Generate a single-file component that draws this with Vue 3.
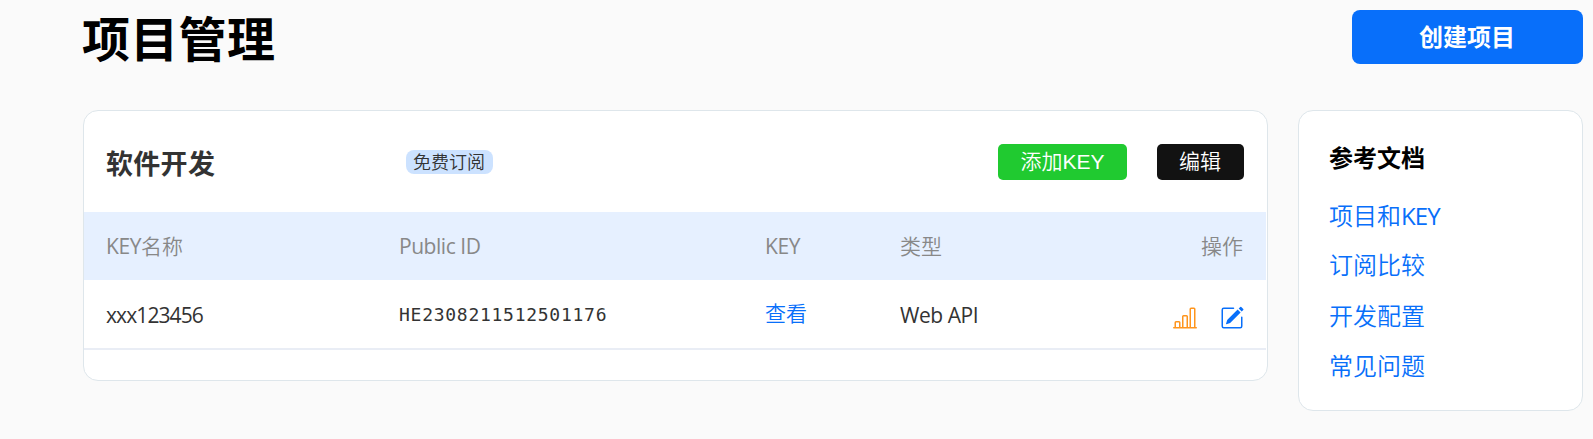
<script setup>
const keys = [
  { name: 'xxx123456', publicId: 'HE2308211512501176', type: 'Web API' }
]
const docs = [
  { zh: '项目和', latin: 'KEY' },
  { zh: '订阅比较' },
  { zh: '开发配置' },
  { zh: '常见问题' }
]
</script>

<template>
  <div class="page">
    <header class="top">
      <h1>项目管理</h1>
      <button class="create">创建项目</button>
    </header>
    <div class="content">
      <main class="card project">
        <div class="project-head">
          <h2>软件开发</h2>
          <div class="plan"><span class="badge">免费订阅</span></div>
          <button class="btn add">添加KEY</button>
          <button class="btn edit">编辑</button>
        </div>
        <div class="row head">
          <span class="first"><span class="latin">KEY</span>名称</span>
          <span class="latin">Public ID</span>
          <span class="latin">KEY</span>
          <span>类型</span>
          <span class="actions">操作</span>
        </div>
        <div v-for="k in keys" :key="k.publicId" class="row body">
          <span class="latin name">{{ k.name }}</span>
          <span class="mono">{{ k.publicId }}</span>
          <a class="view">查看</a>
          <span class="latin">{{ k.type }}</span>
          <span class="actions icons">
            <svg class="chart" viewBox="0 0 16 16" width="24" height="24" fill="currentColor">
              <path d="M11 2a1 1 0 0 1 1-1h2a1 1 0 0 1 1 1v12h.5a.5.5 0 0 1 0 1H.5a.5.5 0 0 1 0-1H1v-3a1 1 0 0 1 1-1h2a1 1 0 0 1 1 1v3h1V7a1 1 0 0 1 1-1h2a1 1 0 0 1 1 1v7h1V2zm1 12h2V2h-2v12zm-3 0V7H7v7h2zm-5 0v-3H2v3h2z" />
            </svg>
            <svg class="pencil" viewBox="0 0 16 16" width="24" height="24" fill="currentColor">
              <path d="M15.502 1.94a.5.5 0 0 1 0 .706L14.459 3.69l-2-2L13.502.646a.5.5 0 0 1 .707 0l1.293 1.293zm-1.75 2.456-2-2L4.939 9.21a.5.5 0 0 0-.121.196l-.805 2.414a.25.25 0 0 0 .316.316l2.414-.805a.5.5 0 0 0 .196-.12l6.813-6.814z" />
              <path fill-rule="evenodd" d="M1 13.5A1.5 1.5 0 0 0 2.5 15h11a1.5 1.5 0 0 0 1.5-1.5v-6a.5.5 0 0 0-1 0v6a.5.5 0 0 1-.5.5h-11a.5.5 0 0 1-.5-.5v-11a.5.5 0 0 1 .5-.5H9a.5.5 0 0 0 0-1H2.5A1.5 1.5 0 0 0 1 2.5v11z" />
            </svg>
          </span>
        </div>
      </main>
      <aside class="card docs">
        <h3>参考文档</h3>
        <a v-for="d in docs" :key="d.zh">{{ d.zh }}<span v-if="d.latin" class="latin">{{ d.latin }}</span></a>
      </aside>
    </div>
  </div>
</template>

<style>
html, body { margin: 0; background: #fafafa; overflow: hidden; }
</style>

<style scoped>
* { box-sizing: border-box; }
.page {
  height: 439px;
  padding: 10px 10px 0 83px;
  background: #fafafa;
  color: #333;
  font-family: "Liberation Sans", "Noto Sans CJK SC", sans-serif;
  font-weight: 350;
  white-space: nowrap;
}
h1, h2, h3 { margin: 0; font-weight: 700; }
button { border: 0; padding: 0; color: #fff; font-family: inherit; }
.latin { font-family: "Open Sans", "Noto Sans", sans-serif; font-weight: 400; letter-spacing: -0.45px; }
.top { display: flex; justify-content: space-between; height: 100px; }
h1 { font-size: 48px; line-height: 62px; color: #000; margin-left: -1px; letter-spacing: 0.3px; }
.create {
  width: 231px;
  height: 54px;
  padding-right: 1px;
  border-radius: 8px;
  background: #086ffa;
  font-size: 24px;
  font-weight: 700;
  line-height: 56px;
}
.content { display: flex; align-items: flex-start; gap: 30px; }
.card { background: #fff; border: 1px solid #dee6eb; border-radius: 15px; }
.project { width: 1185px; height: 271px; }
.project-head { display: flex; align-items: center; height: 101px; padding: 0 23px; }
h2 { width: 300px; font-size: 27px; line-height: 40px; margin: 6px 0 0 -1px; letter-spacing: 0.3px; }
.plan { flex: 1; display: flex; }
.badge {
  width: 87px;
  height: 24px;
  padding-right: 1px;
  border-radius: 8px;
  background: #cce2ff;
  text-align: center;
  font-size: 18px;
  line-height: 26px;
}
.btn { height: 36px; border-radius: 5px; font-size: 21px; font-weight: 350; line-height: 36px; }
.add { width: 129px; background: #20ca30; margin-right: 30px; }
.edit { width: 87px; padding-right: 1px; background: #121212; }
.row {
  display: grid;
  grid-template-columns: 292px 366px 135px 1fr 100px;
  padding: 0 23px;
  margin-right: 1px;
  font-size: 21px;
  line-height: 68px;
}
.row > span, .row > a { height: 68px; }
.head { height: 68px; background: #e6f0ff; color: #888; line-height: 69px; }
.first { margin-left: -1px; }
.body { height: 70px; border-bottom: 2px solid #e9edf5; }
.body .latin { line-height: 70px; }
.body .name { letter-spacing: -0.9px; margin-left: -1px; }
.mono { font-family: "DejaVu Sans Mono", monospace; font-size: 18px; letter-spacing: 0.73px; line-height: 69px; }
.view, .docs a { color: #086ffa; }
.actions { text-align: right; }
.icons { display: flex; justify-content: flex-end; align-items: center; gap: 23px; padding-top: 7px; margin-right: -1px; }
.chart { color: #ff951d; }
.pencil { color: #086ffa; }
.docs { width: 285px; height: 301px; padding: 30px 30px 0; }
h3 { font-size: 24px; line-height: 35px; color: #000; margin-bottom: 14px; }
.docs a { display: block; height: 50.3px; font-size: 24px; line-height: 51px; }
.docs .latin { letter-spacing: -0.9px; }
</style>
